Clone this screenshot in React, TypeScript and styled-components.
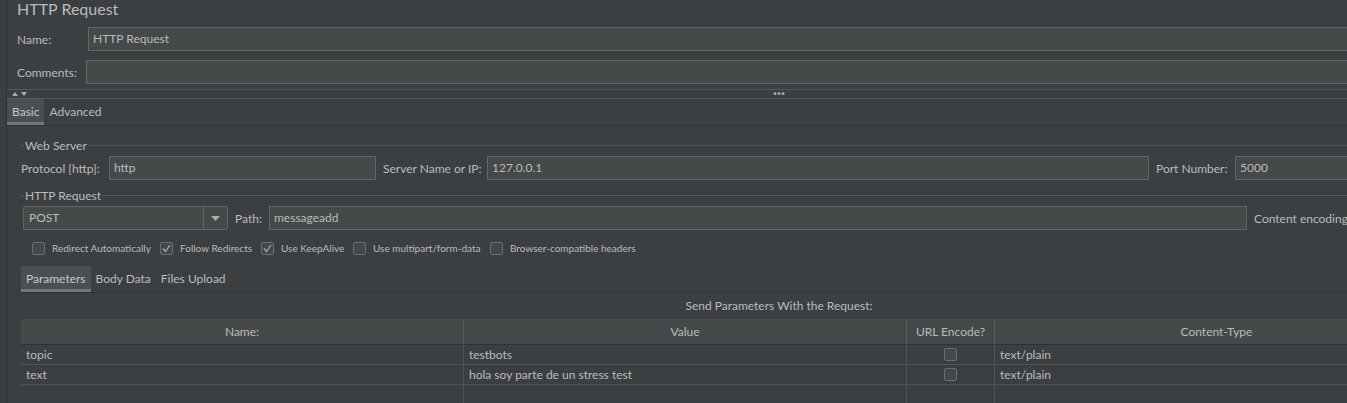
import React from 'react';
import styled, { createGlobalStyle } from 'styled-components';

const Global = createGlobalStyle`
  html, body { margin: 0; padding: 0; background: #3c3f41; overflow: hidden; }
  body { font-family: Lato, "Noto Sans", sans-serif; font-size: 12px; color: #bbbbbb; }
  #root { width: 1347px; height: 403px; overflow: hidden; }
`;

const Page = styled.div`
  display: flex;
  align-items: flex-start;
  width: 1347px;
  height: 403px;
  overflow: hidden;
  background: #3c3f41;
`;

const Gutter = styled.div`
  flex: none;
  width: 6px;
  height: 403px;
  border-right: 1px solid #2e3032;
`;

const Panel = styled.div`
  flex: none;
  width: 1544px;
  display: flex;
  flex-direction: column;
  & > * { flex-shrink: 0; }
`;

const Title = styled.div`
  height: 27px;
  padding-left: 10px;
  font-size: 16px;
  line-height: 18px;
`;

const Row = styled.div<{ $top?: number; $left?: number }>`
  display: flex;
  align-items: center;
  height: 24px;
  margin-top: ${(p) => p.$top ?? 0}px;
  padding-left: ${(p) => p.$left ?? 0}px;
`;

const Label = styled.span<{ $w?: number; $ml?: number }>`
  flex: none;
  width: ${(p) => (p.$w ? `${p.$w}px` : 'auto')};
  margin-left: ${(p) => p.$ml ?? 0}px;
  white-space: nowrap;
`;

const Input = styled.div<{ $w?: number }>`
  box-sizing: border-box;
  height: 24px;
  flex: ${(p) => (p.$w ? 'none' : '1')};
  width: ${(p) => (p.$w ? `${p.$w}px` : 'auto')};
  background: #45494a;
  border: 1px solid #646464;
  padding: 0 4px;
  line-height: 22px;
  white-space: nowrap;
  overflow: hidden;
`;

const Splitter = styled.div`
  margin-top: 5px;
  height: 8px;
  border-top: 1px solid #55585a;
  border-bottom: 1px solid #55585a;
  display: flex;
  align-items: center;
  position: relative;
`;

const Arrows = styled.div`
  display: flex;
  gap: 3px;
  padding-left: 5px;
  svg { display: block; }
`;

const Dots = styled.div`
  position: absolute;
  left: 50%;
  top: 2px;
  transform: translateX(-50%);
  display: flex;
  gap: 1px;
  span { width: 3px; height: 3px; border-radius: 50%; background: #a0a4a6; }
`;

const TabStrip = styled.div<{ $top?: number; $left?: number }>`
  display: flex;
  height: 26px;
  margin-top: ${(p) => p.$top ?? 0}px;
  margin-left: ${(p) => p.$left ?? 0}px;
  border-bottom: 1px solid #323436;
`;

const Tab = styled.div<{ $active?: boolean }>`
  padding: 0 5px;
  line-height: 26px;
  font-size: 12px;
  color: ${(p) => (p.$active ? '#c8c8c8' : '#bbbbbb')};
  background: ${(p) => (p.$active ? '#4b4f51' : 'transparent')};
  box-shadow: ${(p) => (p.$active ? 'inset 0 -3px 0 #727779' : 'none')};
`;

const Group = styled.div`
  display: flex;
  flex-direction: column;
  padding: 0 14px;
  & > * { flex-shrink: 0; }
`;

const GroupHeader = styled.div<{ $top: number }>`
  display: flex;
  align-items: center;
  height: 14px;
  margin-top: ${(p) => p.$top}px;
  &::before {
    content: '';
    width: 3px;
    height: 1px;
    background: #55585a;
  }
  &::after {
    content: '';
    flex: 1;
    height: 1px;
    background: #55585a;
  }
  span { padding: 0 2px 0 1px; white-space: nowrap; }
`;

const Select = styled.div`
  box-sizing: border-box;
  flex: none;
  width: 205px;
  height: 24px;
  margin-left: 2px;
  display: flex;
  background: #45494a;
  border: 1px solid #646464;
  border-radius: 2px;
`;

const SelectValue = styled.div`
  flex: 1;
  padding-left: 5px;
  line-height: 22px;
`;

const SelectArrow = styled.div`
  width: 23px;
  border-left: 1px solid #646464;
  display: flex;
  align-items: center;
  justify-content: center;
`;

const CheckRow = styled.div`
  display: flex;
  align-items: center;
  height: 14px;
  margin-top: 11px;
  padding-left: 11px;
  font-size: 10px;
`;

const CheckItem = styled.label<{ $w: number }>`
  display: flex;
  align-items: center;
  gap: 7px;
  width: ${(p) => p.$w}px;
  flex: none;
  white-space: nowrap;
`;

const Box = styled.span`
  box-sizing: border-box;
  flex: none;
  width: 13px;
  height: 13px;
  border: 1px solid #6b6e70;
  border-radius: 2px;
  background: #43494a;
  display: flex;
  align-items: center;
  justify-content: center;
`;

const Caption = styled.div`
  height: 26px;
  line-height: 26px;
  text-align: center;
  font-size: 12px;
`;

const Table = styled.div`
  display: grid;
  grid-template-columns: 443px 443px 88px 443px;
`;

const HeadCell = styled.div<{ $last?: boolean }>`
  height: 25px;
  line-height: 25px;
  text-align: center;
  font-size: 12px;
  background: #45494a;
  border-bottom: 1px solid #2f3133;
  border-right: ${(p) => (p.$last ? 'none' : '1px solid #5a5d5f')};
`;

const Cell = styled.div<{ $center?: boolean; $last?: boolean; $fill?: boolean }>`
  height: ${(p) => (p.$fill ? 40 : 19)}px;
  line-height: 19px;
  padding-left: ${(p) => (p.$center ? 0 : 5)}px;
  border-bottom: ${(p) => (p.$fill ? 'none' : '1px solid #515456')};
  border-right: ${(p) => (p.$last ? 'none' : '1px solid #515456')};
  display: flex;
  align-items: center;
  justify-content: ${(p) => (p.$center ? 'center' : 'flex-start')};
  white-space: nowrap;
`;

const Check = () => (
  <svg width="11" height="11" viewBox="0 0 11 11">
    <polyline points="2,5.5 4.5,8.5 9,2" fill="none" stroke="#a8a8a8" strokeWidth="1.3" />
  </svg>
);

const checks: { label: string; checked: boolean; w: number }[] = [
  { label: 'Redirect Automatically', checked: false, w: 128 },
  { label: 'Follow Redirects', checked: true, w: 101 },
  { label: 'Use KeepAlive', checked: true, w: 92 },
  { label: 'Use multipart/form-data', checked: false, w: 137 },
  { label: 'Browser-compatible headers', checked: false, w: 180 },
];

const rows = [
  { name: 'topic', value: 'testbots', type: 'text/plain' },
  { name: 'text', value: 'hola soy parte de un stress test', type: 'text/plain' },
];

export default function App() {
  return (
    <Page>
      <Global />
      <Gutter />
      <Panel>
        <Title>HTTP Request</Title>
        <Row $left={10}>
          <Label $w={71}>Name:</Label>
          <Input>HTTP Request</Input>
        </Row>
        <Row $left={10} $top={9}>
          <Label $w={69}>Comments:</Label>
          <Input />
        </Row>
        <Splitter>
          <Arrows>
            <svg width="6" height="4" viewBox="0 0 6 4"><polygon points="0,4 3,0 6,4" fill="#a9acae" /></svg>
            <svg width="6" height="4" viewBox="0 0 6 4"><polygon points="0,0 6,0 3,4" fill="#a9acae" /></svg>
          </Arrows>
          <Dots><span /><span /><span /></Dots>
        </Splitter>
        <TabStrip>
          <Tab $active>Basic</Tab>
          <Tab>Advanced</Tab>
        </TabStrip>
        <Group>
          <GroupHeader $top={12}><span>Web Server</span></GroupHeader>
          <Row $top={4}>
            <Label $w={88}>Protocol [http]:</Label>
            <Input $w={267}>http</Input>
            <Label $w={104} $ml={7}>Server Name or IP:</Label>
            <Input $w={662}>127.0.0.1</Input>
            <Label $w={79} $ml={7}>Port Number:</Label>
            <Input>5000</Input>
          </Row>
          <GroupHeader $top={8}><span>HTTP Request</span></GroupHeader>
          <Row $top={4}>
            <Select>
              <SelectValue>POST</SelectValue>
              <SelectArrow>
                <svg width="9" height="5" viewBox="0 0 9 5"><polygon points="0,0 9,0 4.5,5" fill="#a9acae" /></svg>
              </SelectArrow>
            </Select>
            <Label $w={34} $ml={7}>Path:</Label>
            <Input $w={978}>messageadd</Input>
            <Label $ml={7}>Content encoding:</Label>
          </Row>
          <CheckRow>
            {checks.map((c) => (
              <CheckItem key={c.label} $w={c.w}>
                <Box>{c.checked && <Check />}</Box>
                {c.label}
              </CheckItem>
            ))}
          </CheckRow>
          <TabStrip $top={11}>
            <Tab $active>Parameters</Tab>
            <Tab>Body Data</Tab>
            <Tab>Files Upload</Tab>
          </TabStrip>
          <Caption>Send Parameters With the Request:</Caption>
          <Table>
            <HeadCell>Name:</HeadCell>
            <HeadCell>Value</HeadCell>
            <HeadCell>URL Encode?</HeadCell>
            <HeadCell $last>Content-Type</HeadCell>
            {rows.map((r) => (
              <React.Fragment key={r.name}>
                <Cell>{r.name}</Cell>
                <Cell>{r.value}</Cell>
                <Cell $center><Box /></Cell>
                <Cell $last>{r.type}</Cell>
              </React.Fragment>
            ))}
            <Cell $fill />
            <Cell $fill />
            <Cell $fill />
            <Cell $fill $last />
          </Table>
        </Group>
      </Panel>
    </Page>
  );
}
